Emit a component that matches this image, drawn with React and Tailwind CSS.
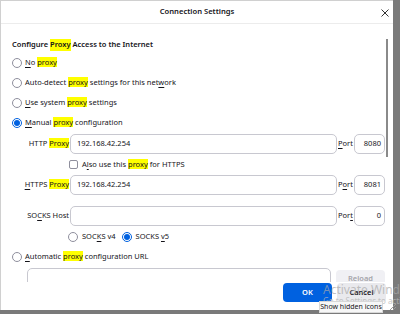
import React from "react";

// highlight for the search term
const Hl = ({ children }) => <span className="bg-[#ffff00]">{children}</span>;
const U = ({ children }) => <span className="underline underline-offset-[1.5px]">{children}</span>;

function Radio({ checked }) {
  return checked ? (
    <span className="w-[10px] h-[10px] rounded-full border border-[#0061e0] flex items-center justify-center shrink-0">
      <span className="w-[6px] h-[6px] rounded-full bg-[#0061e0]" />
    </span>
  ) : (
    <span className="w-[10px] h-[10px] rounded-full border border-[#8f8f9d] bg-white shrink-0" />
  );
}

function RadioRow({ checked, children }) {
  return (
    <div className="h-[20px] flex items-center pl-[11px] gap-[3px]">
      <Radio checked={checked} />
      <span>{children}</span>
    </div>
  );
}

function ProxyRow({ label, value, port, portLabel, className }) {
  return (
    <div className={"flex items-center h-[20px] " + (className || "")}>
      <div className="w-[69px] text-right pr-[1px] whitespace-nowrap">{label}</div>
      <div className="w-[267px] h-[20px] border border-[#c8c8d0] rounded-[5px] flex items-center pl-[6px]">
        {value}
      </div>
      <div className="w-[17px] pl-[1px]">{portLabel}</div>
      <div className="w-[31px] h-[20px] border border-[#c8c8d0] rounded-[5px] flex items-center justify-end pr-[3px]">
        {port}
      </div>
    </div>
  );
}

export default function App() {
  return (
    <div
      className="w-[400px] h-[314px] bg-[#7a7a7a] relative overflow-hidden text-[#15141a] text-[7.5px]"
      style={{ fontFamily: '"Noto Sans", "Open Sans", sans-serif' }}
    >
      <div className="w-[393px] h-[310px] bg-white border-t border-l border-[#d0d0d0] flex flex-col relative">
        {/* title bar */}
        <div className="h-[23px] border-b border-[#ececec] flex items-center justify-center relative shrink-0">
          <span className="font-semibold text-[7.6px]">Connection Settings</span>
          <svg className="absolute right-[4px] top-[8px]" width="8" height="8" viewBox="0 0 8 8">
            <path d="M0.5 0.5L7.5 7.5M7.5 0.5L0.5 7.5" stroke="#333" strokeWidth="1" />
          </svg>
        </div>

        {/* scroll content */}
        <div className="h-[258px] overflow-hidden relative shrink-0">
          <div className="absolute left-[385px] top-[15px] w-[2px] h-[118px] bg-[#8a8a8a]" />
          <div className="pt-[13px]">
            <div className="h-[16px] flex items-center pl-[11px] font-semibold">
              Configure&nbsp;<Hl>Proxy</Hl>&nbsp;Access to the Internet
            </div>
            <RadioRow>
              <U>N</U>o <Hl>proxy</Hl>
            </RadioRow>
            <RadioRow>
              Auto-detect <Hl>proxy</Hl> settings for this net<U>w</U>ork
            </RadioRow>
            <RadioRow>
              <U>U</U>se system <Hl>proxy</Hl> settings
            </RadioRow>
            <RadioRow checked>
              <U>M</U>anual <Hl>proxy</Hl> configuration
            </RadioRow>

            <ProxyRow
              className="mt-[1px]"
              label={<>HTTP <Hl>Proxy</Hl></>}
              value="192.168.42.254"
              portLabel={<><U>P</U>ort</>}
              port="8080"
            />
            <div className="h-[21px] flex items-center pl-[68px] gap-[4px]">
              <span className="w-[9px] h-[9px] border border-[#8f8f9d] rounded-[2px] bg-white" />
              <span>
                A<U>l</U>so use this <Hl>proxy</Hl> for HTTPS
              </span>
            </div>
            <ProxyRow
              label={<><U>H</U>TTPS <Hl>Proxy</Hl></>}
              value="192.168.42.254"
              portLabel={<>P<U>o</U>rt</>}
              port="8081"
            />
            <ProxyRow
              className="mt-[11px]"
              label={<>SO<U>C</U>KS Host</>}
              value=""
              portLabel={<>Por<U>t</U></>}
              port="0"
            />
            <div className="h-[21px] flex items-center pl-[67px]">
              <Radio />
              <span className="ml-[4px]">
                SOC<U>K</U>S v4
              </span>
              <span className="ml-[6px]">
                <Radio checked />
              </span>
              <span className="ml-[4px]">
                SOCKS <U>v</U>5
              </span>
            </div>
            <RadioRow>
              <U>A</U>utomatic <Hl>proxy</Hl> configuration URL
            </RadioRow>
            <div className="flex items-start mt-[1px]">
              <div className="ml-[26px] w-[304px] h-[30px] border border-[#c8c8d0] rounded-[5px]" />
              <div className="ml-[5px] mt-[2px] w-[49px] h-[24px] rounded-[4px] bg-[#f0f0f4] text-[#a4a4aa] font-semibold flex justify-center pt-[3px]">
                Reload
              </div>
            </div>
          </div>
        </div>

        {/* footer buttons */}
        <div className="flex justify-end gap-[5px] pr-[7px] pt-[1px]">
          <div className="w-[49px] h-[19px] rounded-[4px] bg-[#0061e0] text-white font-semibold flex items-center justify-center">
            OK
          </div>
          <div className="w-[49px] h-[19px] rounded-[4px] bg-[#e9e9ed] font-semibold flex items-center justify-center">
            Cancel
          </div>
        </div>
      </div>

      {/* windows watermark + tray tooltip */}
      <div className="absolute left-[323px] top-[281px] text-[12px] text-[#a8a8a8]/70 whitespace-nowrap">
        Activate Windows
      </div>
      <div className="absolute left-[323px] top-[295px] text-[8px] text-[#b8b8b8]/80 whitespace-nowrap">
        Go to Settings to activate
      </div>
      <div className="absolute left-[319px] top-[301px] w-[64px] h-[12px] bg-[#f7f7f7] border border-[#d8d8d8] text-[7px] flex items-center justify-center whitespace-nowrap">
        Show hidden icons
      </div>
      <svg className="absolute left-[389px] top-[303px]" width="8" height="8" viewBox="0 0 8 8">
        <path d="M7 1L1 7M7 4L4 7" stroke="#999" strokeWidth="1" />
      </svg>
    </div>
  );
}
